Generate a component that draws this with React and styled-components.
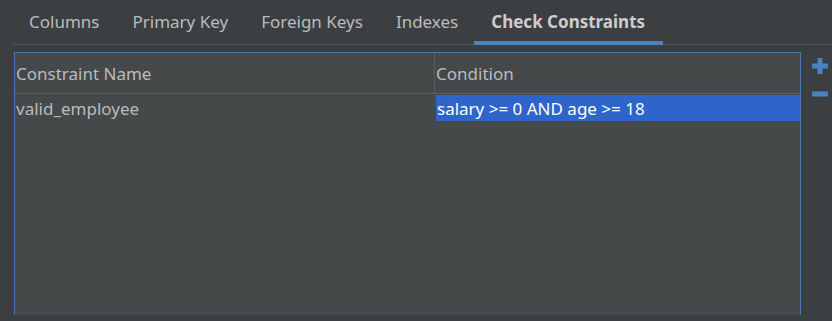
import React from "react";
import styled, { createGlobalStyle } from "styled-components";

const GlobalStyle = createGlobalStyle`
  *, *::before, *::after {
    box-sizing: border-box;
  }
  html, body {
    margin: 0;
    padding: 0;
    background: #3c3f41;
  }
  body {
    font-family: "Noto Sans", "Open Sans", sans-serif;
  }
`;

const Page = styled.div`
  width: 832px;
  height: 321px;
  background: #3c3f41;
  overflow: hidden;
`;

const TabBar = styled.div`
  display: flex;
  margin-left: 12px;
  padding-left: 0.5px;
  height: 45px;
  border-bottom: 1px solid #515456;
`;

const Tab = styled.div`
  position: relative;
  display: flex;
  align-items: center;
  padding: 0 16.5px 1px;
  font-size: 17px;
  font-weight: ${(p) => (p.active ? 700 : 400)};
  color: ${(p) => (p.active ? "#cdcdcd" : "#b9bcbe")};

  &::after {
    content: "";
    display: ${(p) => (p.active ? "block" : "none")};
    position: absolute;
    left: -1px;
    right: -1px;
    bottom: -1px;
    height: 4px;
    background: #4a83c4;
  }
`;

const Body = styled.div`
  display: flex;
  padding: 7px 0 0 14px;
`;

const Panel = styled.div`
  flex: 0 0 787px;
  height: 263px;
  background: #45494a;
  border: 1px solid #4a78b4;
  border-bottom: none;
`;

const Row = styled.div`
  display: grid;
  grid-template-columns: 420px 1fr;
  height: ${(p) => p.h}px;
  border-bottom: ${(p) => (p.header ? "1px solid #5b5e60" : "none")};
`;

const Cell = styled.div`
  display: flex;
  align-items: center;
  padding: 1px 0 0 1px;
  margin: ${(p) => (p.selected ? "1px 0 0 1px" : "0")};
  font-size: 17px;
  color: ${(p) => (p.selected ? "#ffffff" : "#b9bcbe")};
  background: ${(p) => (p.selected ? "#2f65ca" : "transparent")};
  border-right: ${(p) => (p.divider ? "1px solid #5b5e60" : "none")};
  white-space: nowrap;
`;

const Tools = styled.div`
  flex: 0 0 31px;
  display: flex;
  flex-direction: column;
  align-items: center;
  gap: 17px;
  padding: 6px 0 0 7px;
`;

const ToolButton = styled.svg`
  display: block;
`;

const tabs = ["Columns", "Primary Key", "Foreign Keys", "Indexes", "Check Constraints"];

export default function App() {
  return (
    <Page>
      <GlobalStyle />
      <TabBar>
        {tabs.map((t) => (
          <Tab key={t} active={t === "Check Constraints"}>
            {t}
          </Tab>
        ))}
      </TabBar>
      <Body>
        <Panel>
          <Row header h={41}>
            <Cell divider>Constraint Name</Cell>
            <Cell>Condition</Cell>
          </Row>
          <Row h={27}>
            <Cell>valid_employee</Cell>
            <Cell selected>salary &gt;= 0 AND age &gt;= 18</Cell>
          </Row>
        </Panel>
        <Tools>
          <ToolButton width="16" height="16" viewBox="0 0 16 16">
            <rect x="0" y="5.5" width="16" height="5" fill="#4a83c4" />
            <rect x="5.5" y="0" width="5" height="16" fill="#4a83c4" />
          </ToolButton>
          <ToolButton width="16" height="6" viewBox="0 0 16 6">
            <rect x="0" y="0.5" width="16" height="5" fill="#4a83c4" />
          </ToolButton>
        </Tools>
      </Body>
    </Page>
  );
}
